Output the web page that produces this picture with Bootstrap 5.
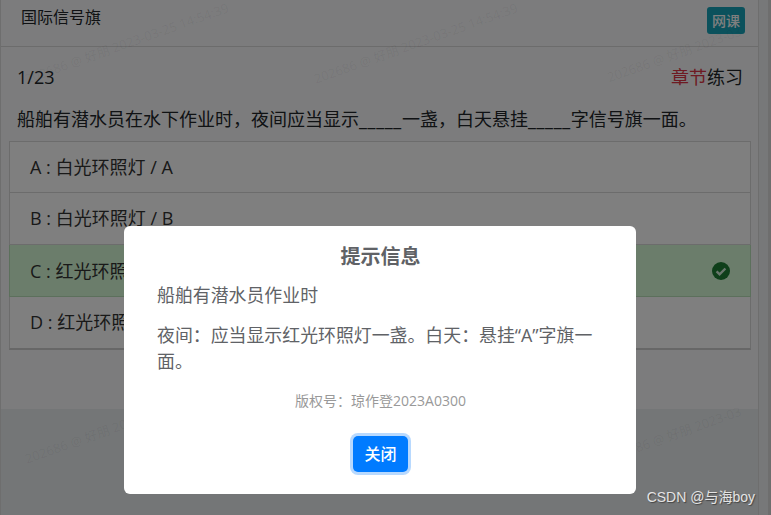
<!doctype html>
<html lang="zh"><head><meta charset="utf-8">
<link href="https://cdn.jsdelivr.net/npm/bootstrap@5.3.0/dist/css/bootstrap.min.css" rel="stylesheet">
<style>
html,body{height:515px;overflow:hidden}
body{background:#e9ecef;font-family:"Open Sans","Noto Sans CJK SC",sans-serif;position:relative;color:#212529}
.frame-main{width:759px;height:515px;border:solid #dcdcdc;border-width:0 1px}
.frame-gutter{width:9px;background:#eef0f2}
.frame-edge{width:3px;background:#dcdcdc}
.page-shell{height:409px;background:#f8f9fa}
.qcard-head{height:47px;border-bottom:1px solid #d8d8d8;padding:5px 0 0 20px;font-size:16px;line-height:24px}
.tag-course{background:#17a2b8;color:#fff;font-size:14px;line-height:27px;width:38px;height:27px;text-align:center;border-radius:3px;font-weight:500;margin:2px 13px 0 0}
.qcard-body{padding:17px 0 0 8px;font-size:18px}
.q-meta{padding:0 15px 0 8px;line-height:26px}
.q-title{padding:16px 0 0 8px;font-size:18px;line-height:27px;margin-bottom:8px;white-space:nowrap}
.blank-line{letter-spacing:.7px}
.opt-list{width:742px;border-radius:0;position:relative;z-index:1}
.opt-list .list-group-item{height:52px;padding:13px 20px;font-size:18px;line-height:24px;border-color:#d8d8d8;color:#333;border-radius:0;background:#fff}
.opt-list .list-group-item:last-child{height:53px;border-bottom:2px solid #cfcfcf}
.opt-list .opt-right{background:#d6fbd6;border-color:#b8e0b8}
.wm-layer{position:absolute;left:0;top:0;display:grid;grid-template-columns:254px 324px 193px;grid-template-rows:88px 292px 88px;pointer-events:none}
.wm-item{display:flex;align-items:center;justify-content:center;white-space:nowrap;font-size:13px;color:rgba(0,0,0,.06);transform:rotate(-19.5deg)}
.wm-low{grid-row:3}
.wm-cut{transform:translateY(11px) rotate(-19.5deg)}
.shade{position:absolute;inset:0;background:#000;opacity:.5;z-index:2}
.tip-box{position:absolute;left:124px;top:226px;width:512px;height:268px;background:#fff;border-radius:6px;color:#606266;padding:0 32px 0 33px;z-index:3}
.tip-title{font-size:20px;font-weight:700;text-align:center;line-height:28px;padding-top:17px;height:44px;margin:0 0 12px}
.tip-text{font-size:17.9px;line-height:26px;margin:0 0 14px}
.tip-copy{font-size:14px;color:#999;text-align:center;line-height:20px;margin:17px 0 0}
.tip-btn{background:#007bff;border:0;color:#fff;font-size:16px;font-weight:500;width:55px;height:36px;border-radius:5px;box-shadow:0 0 0 3px #b8d9fe;padding:0}
.tip-foot{text-align:center;margin-top:25px}
.wm-csdn{position:absolute;right:16px;bottom:8px;color:#e4e4e4;font-family:"Liberation Sans","Noto Sans CJK SC",sans-serif;font-size:14px;line-height:20px;text-shadow:1px 1px 1px #444;z-index:3}
</style></head><body>
<div class="d-flex">
<div class="frame-main">
<div class="page-shell">
<div class="qcard-head d-flex justify-content-between align-items-start"><span>国际信号旗</span><span class="tag-course">网课</span></div>
<div class="qcard-body">
<div class="q-meta d-flex justify-content-between"><span>1/23</span><span><span class="text-danger">章节</span>练习</span></div>
<div class="q-title">船舶有潜水员在水下作业时，夜间应当显示<span class="blank-line">_____</span>一盏，白天悬挂<span class="blank-line">_____</span>字信号旗一面。</div>
<ul class="list-group opt-list">
<li class="list-group-item">A : 白光环照灯 / A</li>
<li class="list-group-item">B : 白光环照灯 / B</li>
<li class="list-group-item opt-right d-flex justify-content-between align-items-center">C : 红光环照灯 / A
<svg width="18" height="18" viewBox="0 0 18 18"><circle cx="9" cy="9" r="9" fill="#1e7e34"/><path d="M4.6 9.3l3 3 5.8-5.8" fill="none" stroke="#d4edda" stroke-width="2.4"/></svg></li>
<li class="list-group-item">D : 红光环照灯 / B</li>
</ul>
</div></div>
</div>
<div class="frame-gutter"></div><div class="frame-edge"></div>
</div>
<div class="wm-layer">
<span class="wm-item">202686 @ 好朋 2023-03-25 14:54:39</span><span class="wm-item">202686 @ 好朋 2023-03-25 14:54:39</span><span class="wm-item wm-cut">202686 @ 好朋 2023-03</span>
<span class="wm-item wm-low">202686 @ 好朋 2023-03-25 14:54:39</span><span class="wm-item wm-low"></span><span class="wm-item wm-low wm-cut">202686 @ 好朋 2023-03</span>
</div>
<div class="shade"></div>
<div class="tip-box">
<h5 class="tip-title">提示信息</h5>
<p class="tip-text">船舶有潜水员作业时</p>
<p class="tip-text">夜间：应当显示红光环照灯一盏。白天：悬挂“A”字旗一面。</p>
<p class="tip-copy">版权号：琼作登2023A0300</p>
<div class="tip-foot"><button class="btn tip-btn">关闭</button></div>
</div>
<div class="wm-csdn">CSDN @与海boy</div>
<script src="https://cdn.jsdelivr.net/npm/bootstrap@5.3.0/dist/js/bootstrap.bundle.min.js"></script>
</body></html>
